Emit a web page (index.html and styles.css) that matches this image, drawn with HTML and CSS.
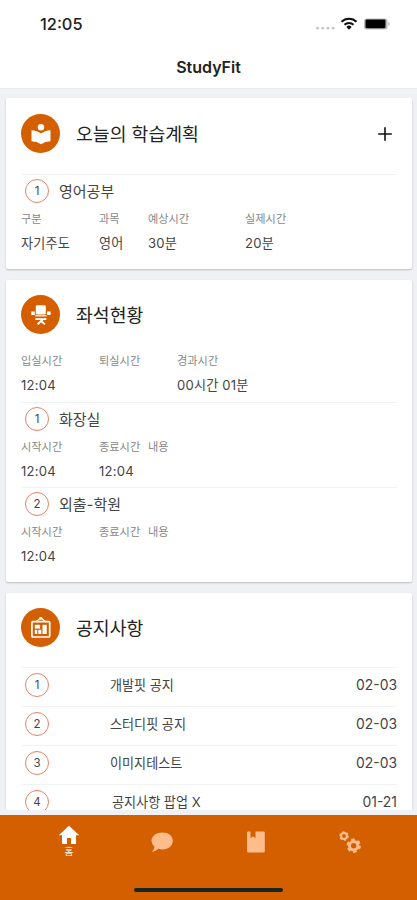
FILE: index.html
```html
<!DOCTYPE html>
<html lang="ko">
<head>
<meta charset="utf-8">
<meta name="viewport" content="width=device-width, initial-scale=1">
<title>StudyFit</title>
<link rel="stylesheet" href="styles.css">
</head>
<body>
<div class="app">
  <header class="top">
    <div class="status">
      <span class="clock">12:05</span>
      <svg class="status-icons" width="76" height="16" viewBox="0 0 76 16">
        <g fill="#c4c4c4"><circle cx="2.500" cy="12.200" r="1.400"/><circle cx="7.700" cy="12.200" r="1.400"/><circle cx="12.900" cy="12.200" r="1.400"/><circle cx="18.100" cy="12.200" r="1.400"/></g>
        <g fill="none" stroke="#111" stroke-width="2"><path d="M26.500 5.800a10.500 10.500 0 0 1 15 0"/><path d="M29.500 8.800a6.400 6.400 0 0 1 9 0"/></g>
        <path d="M31.400 10.900a3.700 3.700 0 0 1 5.200 0l-2.600 2.800z" fill="#111"/>
        <rect x="49" y="2.400" width="23.500" height="11" rx="2.500" fill="#bbb"/>
        <rect x="50.500" y="3.600" width="20" height="8.600" rx="1.200" fill="#000"/>
        <path d="M73.500 5.700q2.200 2.200 0 4.400z" fill="#999"/>
      </svg>
    </div>
    <h1 class="app-title">StudyFit</h1>
  </header>

  <main class="feed">
    <section class="card plan">
      <div class="card-head">
        <span class="badge"><svg width="22" height="22" viewBox="0 0 22 22"><circle cx="11" cy="4.300" r="3.200" fill="#fff"/><path d="M1.500 7.200Q7 7.400 11 10.600Q15 7.400 20.500 7.200V18.300Q15 18.400 11 21.300Q7 18.400 1.500 18.300z" fill="#fff"/></svg></span>
        <h2>오늘의 학습계획</h2>
        <svg class="add" width="14" height="14" viewBox="0 0 14 14"><path d="M7 .2v13.600M.2 7h13.600" stroke="#111" stroke-width="1.600"/></svg>
      </div>
      <div class="entry">
        <div class="entry-title"><span class="num">1</span>영어공부</div>
        <dl class="facts cols-plan">
          <div><dt>구분</dt><dd>자기주도</dd></div>
          <div><dt>과목</dt><dd>영어</dd></div>
          <div><dt>예상시간</dt><dd>30분</dd></div>
          <div><dt>실제시간</dt><dd>20분</dd></div>
        </dl>
      </div>
    </section>

    <section class="card seat">
      <div class="card-head">
        <span class="badge"><svg width="22" height="22" viewBox="0 0 22 22"><g fill="#fff"><rect x="5.800" y="1.200" width="10" height="9.300" rx="1.200"/><rect x="1.200" y="7.500" width="3.600" height="3.500"/><rect x="17" y="7.500" width="3.600" height="3.500"/><rect x="5.200" y="11.200" width="11.400" height="1.200"/><rect x="5.400" y="14.200" width="11" height="1.800"/></g><path d="M13 15.200L7.500 20.400M11.300 17.200l3.700 3.200" fill="none" stroke="#fff" stroke-width="1.900"/></svg></span>
        <h2>좌석현황</h2>
      </div>
      <dl class="facts cols-seat">
        <div><dt>입실시간</dt><dd>12:04</dd></div>
        <div><dt>퇴실시간</dt><dd></dd></div>
        <div><dt>경과시간</dt><dd>00시간 01분</dd></div>
      </dl>
      <div class="entry">
        <div class="entry-title"><span class="num">1</span>화장실</div>
        <dl class="facts cols-plan">
          <div><dt>시작시간</dt><dd>12:04</dd></div>
          <div><dt>종료시간</dt><dd>12:04</dd></div>
          <div><dt>내용</dt><dd></dd></div>
        </dl>
      </div>
      <div class="entry">
        <div class="entry-title"><span class="num">2</span>외출-학원</div>
        <dl class="facts cols-plan">
          <div><dt>시작시간</dt><dd>12:04</dd></div>
          <div><dt>종료시간</dt><dd></dd></div>
          <div><dt>내용</dt><dd></dd></div>
        </dl>
      </div>
    </section>

    <section class="card notice">
      <div class="card-head">
        <span class="badge"><svg width="22" height="22" viewBox="0 0 22 22"><g fill="none" stroke="#fff"><rect x="1.900" y="4.700" width="17.800" height="15.300" rx="1" stroke-width="1.700"/><path d="M6 4.700L10.800 .8L15.600 4.700" stroke-width="1.200"/></g><g fill="#fff"><circle cx="10.800" cy="1.300" r="1.500"/><rect x="4.800" y="7.800" width="5.300" height="3.800"/><rect x="4.800" y="12.800" width="2.400" height="4.200"/><rect x="8.300" y="12.800" width="3" height="4.200"/><rect x="12.500" y="7.800" width="4.200" height="9.200"/></g></svg></span>
        <h2>공지사항</h2>
      </div>
      <ul class="notices">
        <li><span class="num">1</span><span class="subject">개발핏 공지</span><time>02-03</time></li>
        <li><span class="num">2</span><span class="subject">스터디핏 공지</span><time>02-03</time></li>
        <li><span class="num">3</span><span class="subject">이미지테스트</span><time>02-03</time></li>
        <li><span class="num">4</span><span class="subject popup">공지사항 팝업 X</span><time>01-21</time></li>
      </ul>
    </section>
  </main>

  <nav class="tabs">
    <div class="tab-row">
      <a class="tab active"><svg width="22" height="20" viewBox="0 0 22 20"><path d="M11 .8L21.200 10.300H18V19H13V13H9V19H4V10.300H.8z"/></svg><span>홈</span></a>
      <a class="tab"><svg width="22" height="22" viewBox="0 0 22 22"><path d="M11.500 1.500C17.500 1.500 21.800 5 21.800 9.800S17.500 18.500 11.500 18.500Q9 18.500 7.200 17.800Q4.800 20.500 .9 20.800Q3.400 18.600 3.500 15.700Q.5 13.200 .5 9.800C.5 5 5.500 1.500 11.500 1.500z"/></svg></a>
      <a class="tab"><svg width="22" height="22" viewBox="0 0 22 22"><path d="M2 1.800Q2 .5 3.300 .5H5.500V7.300L8 5.200L10.500 7.300V.5H18.500Q19.800 .5 19.800 1.800V20.200Q19.800 21.500 18.500 21.500H3.300Q2 21.500 2 20.200z"/></svg></a>
      <a class="tab"><svg width="22" height="22" viewBox="0 0 22 22"><g fill="none" stroke="#ffbd8c"><circle cx="5" cy="5" r="2.900" stroke-width="2"/><circle cx="5" cy="5" r="4" stroke-width="1.600" stroke-dasharray="2.100 2.089"/><circle cx="14.700" cy="14.700" r="4.200" stroke-width="3"/><circle cx="14.700" cy="14.700" r="6.200" stroke-width="2" stroke-dasharray="3.500 2.993"/></g></svg></a>
    </div>
    <div class="home-bar"></div>
  </nav>
</div>
</body>
</html>
```
FILE: styles.css
```css
* { box-sizing: border-box; }

body {
  margin: 0;
  font-family: Inter, "Noto Sans CJK KR", sans-serif;
  color: #444;
}

h1, h2, dl, dd, ul { margin: 0; padding: 0; }

.app {
  width: 417px;
  height: 900px;
  display: flex;
  flex-direction: column;
  overflow: hidden;
  background: #eff1f4;
}

.top {
  height: 89px;
  flex: none;
  background: #fff;
  border-bottom: 1px solid #e9ebee;
}

.status {
  height: 46px;
  display: flex;
  align-items: center;
  justify-content: space-between;
  padding: 2px 26px 0 40px;
}

.clock {
  font-size: 16.4px;
  font-weight: 500;
  color: #222;
}

.status-icons { display: block; }

.app-title {
  font-size: 16px;
  line-height: 43px;
  font-weight: 600;
  text-align: center;
  color: #222;
}

.feed {
  height: 721px;
  flex: none;
  overflow: hidden;
  padding: 9px 5px 0 6px;
  display: flex;
  flex-direction: column;
  gap: 11px;
}

.card {
  flex: none;
  background: #fff;
  border-radius: 2px;
  padding: 0 15px;
  box-shadow: 0 1px 2px rgba(0, 0, 0, .22);
}

.plan { height: 171px; }
.seat { height: 302px; }
.notice { height: 260px; }

.card-head {
  height: 71px;
  display: flex;
  align-items: center;
}

.plan .card-head { height: 76px; padding-bottom: 5px; }
.seat .card-head { height: 69px; }
.notice .card-head { height: 74px; padding-bottom: 5px; }

.badge {
  width: 39px;
  height: 39px;
  border-radius: 50%;
  background: #d35f00;
  display: flex;
  align-items: center;
  justify-content: center;
}

.card-head h2 {
  margin-left: 16px;
  font-size: 18.3px;
  line-height: 26px;
  font-weight: 400;
  color: #222;
}

.add { margin: 0 5px 0 auto; }

.entry { border-top: 1px solid #f2f2f3; }

.entry-title {
  height: 33px;
  display: flex;
  align-items: center;
  padding-bottom: 2px;
  font-size: 15px;
}

.num {
  width: 24px;
  height: 24px;
  flex: none;
  margin: 0 10px 0 4px;
  border: 1px solid #e58364;
  border-radius: 50%;
  font-size: 11.5px;
  line-height: 22px;
  text-align: center;
}

.facts { display: grid; }
.cols-plan { grid-template-columns: 78px 49px 97px 1fr; }
.cols-seat { grid-template-columns: 78px 78px 1fr; padding-top: 1px; height: 53px; }

dt {
  height: 23px;
  font-size: 11.2px;
  line-height: 23px;
  color: #888;
  white-space: nowrap;
}

dd {
  height: 24px;
  font-size: 13.1px;
  line-height: 24px;
  letter-spacing: .2px;
  white-space: nowrap;
}

.entry .facts { height: 51px; }

.notices { list-style: none; }

.notices li {
  height: 39px;
  border-top: 1px solid #f2f2f3;
  display: flex;
  align-items: center;
  padding-bottom: 4px;
  font-size: 13.1px;
}

.subject { margin-left: 51px; padding-bottom: 1px; }
.subject.popup { margin-left: 53px; }
.notices time { margin-left: auto; font-size: 13.9px; }

.tabs {
  flex: 1;
  margin-top: 5px;
  background: #d35f00;
  display: flex;
  flex-direction: column;
  align-items: center;
}

.tab-row {
  width: 375px;
  height: 73px;
  display: grid;
  grid-template-columns: repeat(4, 1fr);
}

.tab {
  display: flex;
  flex-direction: column;
  align-items: center;
  padding: 16px 0 0 1px;
}

.tab svg { display: block; fill: #ffbd8c; }
.tab.active { padding: 10px 0 0 2px; color: #fff; }
.tab.active svg { fill: #fff; }
.tab.active span { font-size: 9.5px; line-height: 14px; }

.home-bar {
  width: 149px;
  height: 4px;
  border-radius: 2px;
  background: #172622;
}
```
